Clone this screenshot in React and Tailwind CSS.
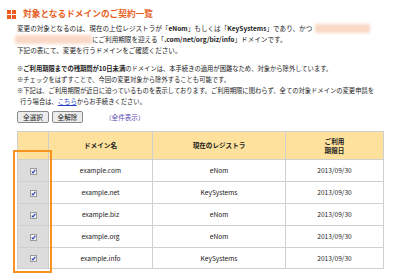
import React from "react";

const rows = [
  ["example.com", "eNom"],
  ["example.net", "KeySystems"],
  ["example.biz", "eNom"],
  ["example.org", "eNom"],
  ["example.info", "KeySystems"],
];

function Check() {
  return (
    <span className="inline-flex items-center justify-center w-[7px] h-[7px] border border-[#9a9a9a] bg-[#f4f4f8] align-middle">
      <svg width="5" height="5" viewBox="0 0 5 5">
        <path d="M0.8 2.6 L2 3.9 L4.3 0.8" stroke="#2a3fb0" strokeWidth="1.1" fill="none" />
      </svg>
    </span>
  );
}

export default function App() {
  const jp = { fontFamily: '"Noto Sans CJK JP", "Noto Sans", sans-serif' };
  return (
    <div
      className="relative w-[400px] h-[280px] bg-white overflow-hidden text-[#222] text-[6.6px] leading-[11px]"
      style={jp}
    >
      <div className="flex items-center h-[14px] mt-[7px] ml-[7px] gap-[7px]">
        <div className="grid grid-cols-2 gap-[1px] w-[9px] h-[9px]">
          <span className="bg-[#ef5a1e]" />
          <span className="bg-[#ef5a1e]" />
          <span className="bg-[#ef5a1e]" />
          <span className="bg-[#ef5a1e]" />
        </div>
        <div className="text-[8.7px] font-bold text-[#e8601e] leading-[14px]">対象となるドメインのご契約一覧</div>
      </div>

      <div className="ml-[17px] mt-[2px]">
        <div className="flex items-center whitespace-nowrap h-[11px]">
          <span>
            変更の対象となるのは、現在の上位レジストラが「<b>eNom</b>」もしくは「<b>KeySystems</b>」であり、かつ
          </span>
          <span className="ml-[3px] w-[55px] h-[9px] bg-[#f9d9c6] blur-[1.5px]" />
        </div>
        <div className="flex items-center whitespace-nowrap h-[11px]">
          <span className="ml-[-2px] w-[77px] h-[9px] bg-[#f9d9c6] blur-[1.5px]" />
          <span>
            にご利用期限を迎える「<b>.com/net/org/biz/info</b>」ドメインです。
          </span>
        </div>
        <div className="h-[11px] whitespace-nowrap">下記の表にて、変更を行うドメインをご確認ください。</div>

        <div className="mt-[7px] text-[6.3px] whitespace-nowrap">
          <div className="h-[11px]">
            ※<b>ご利用期限までの残期間が10日未満</b>のドメインは、本手続きの適用が困難なため、対象から除外しています。
          </div>
          <div className="h-[11px]">※チェックをはずすことで、今回の変更対象から除外することも可能です。</div>
          <div className="h-[11px]">
            ※下記は、ご利用期限が近日に迫っているものを表示しております。ご利用期限に関わらず、全ての対象ドメインの変更申請を
          </div>
          <div className="h-[11px] pl-[3px]">
            行う場合は、<span className="text-[#2340c8] underline">こちら</span>からお手続きください。
          </div>
        </div>

        <div className="flex items-center mt-[4px] h-[12px]">
          <button className="h-[12px] w-[32px] border border-[#8a8a8a] rounded-[2px] bg-[#ececec] text-[6.6px] leading-[10px] text-[#222]">
            全選択
          </button>
          <button className="ml-[3px] h-[12px] w-[31px] border border-[#8a8a8a] rounded-[2px] bg-[#ececec] text-[6.6px] leading-[10px] text-[#222]">
            全解除
          </button>
          <span className="ml-[22px] text-[#5a48b0]">（全件表示）</span>
        </div>

        <table className="mt-[8px] border-collapse border border-[#cfcfcf] text-center">
          <thead>
            <tr className="h-[28px] bg-[#fee19c] font-bold text-[#222]">
              <th className="w-[31px] border border-[#cfcfcf]" />
              <th className="w-[104px] border border-[#cfcfcf]">ドメイン名</th>
              <th className="w-[133px] border border-[#cfcfcf]">現在のレジストラ</th>
              <th className="w-[98px] border border-[#cfcfcf] leading-[9px]">
                ご利用
                <br />
                期限日
              </th>
            </tr>
          </thead>
          <tbody>
            {rows.map(([d, r], i) => (
              <tr key={d} className={i === 4 ? "h-[21px]" : "h-[22px]"}>
                <td className="bg-[#dcdcdc] border border-[#cfcfcf]">
                  <Check />
                </td>
                <td className="border border-[#cfcfcf]">{d}</td>
                <td className="border border-[#cfcfcf]">{r}</td>
                <td className="border border-[#cfcfcf]">2013/09/30</td>
              </tr>
            ))}
          </tbody>
        </table>
      </div>

      <div className="absolute left-[13px] top-[150px] w-[39px] h-[123px] border-2 border-[#f7931e]" />
    </div>
  );
}
